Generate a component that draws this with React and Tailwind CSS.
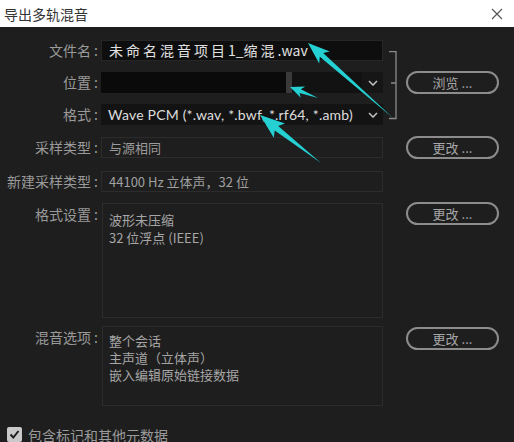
import React from 'react';

const cjk = { fontFamily: '"Noto Sans CJK SC", "Noto Sans", sans-serif' };

function Label({ children, className = '' }) {
    return (
        <div className={`w-[98px] shrink-0 text-right text-[14px] leading-[21px] text-[#9a9a9a] ${className}`}>
            {children}
            <span className="ml-[3px]">:</span>
        </div>
    );
}

function PillButton({ children, className = '' }) {
    return (
        <button className={`w-[93px] h-[23px] shrink-0 rounded-full border-2 border-[#8c8c8c] text-[13px] leading-none text-[#a6a6a6] flex items-center justify-center ${className}`}>
            {children}
        </button>
    );
}

function Chevron() {
    return (
        <svg width="10" height="6" viewBox="0 0 10 6" className="mx-auto">
            <path d="M1 1 L5 5 L9 1" fill="none" stroke="#bdbdbd" strokeWidth="1.6" />
        </svg>
    );
}

function Arrows() {
    return (
        <svg className="absolute inset-0 pointer-events-none" width="514" height="442" viewBox="0 0 514 442">
            <polygon fill="#24d0d2" points="308,43 329.8,51.6 323.2,53 393,118 319.8,56.8 319.2,63.6" />
            <polygon fill="#24d0d2" points="290,87 305.2,86.5 300.9,89.2 318,98 299.5,92.9 300.8,97.7" />
            <polygon fill="#24d0d2" points="260,115 285,123.5 278.2,126 321,163 274.7,130.5 273.8,137.8" />
        </svg>
    );
}

export default function App() {
    return (
        <div className="relative w-[514px] h-[442px] overflow-hidden bg-[#1e1e1e]" style={cjk}>
            <div className="h-[27px] bg-white flex items-center justify-between pl-[4px] pr-[11px]">
                <span className="text-[14px] text-[#333] leading-none">导出多轨混音</span>
                <svg width="12" height="12" viewBox="0 0 12 12">
                    <path d="M1 1 L11 11 M11 1 L1 11" stroke="#555" strokeWidth="1.2" />
                </svg>
            </div>

            <div className="pt-[13px]">
                <div className="flex">
                    <div className="flex flex-col gap-[11px] w-[383px]">
                        <div className="flex h-[21px]">
                            <Label>文件名</Label>
                            <div className="ml-[3px] flex-1 bg-[#0e0e0e] border border-[#262626] pl-[7px] text-[14px] leading-[19px] text-[#e2e2e2] whitespace-nowrap">
                                <span className="tracking-[3px]">未命名混音项目</span>1_<span className="tracking-[3px]">缩混</span>.wav
                            </div>
                        </div>
                        <div className="flex h-[21px]">
                            <Label>位置</Label>
                            <div className="ml-[3px] flex-1 flex">
                                <div className="w-[185px] bg-[#0a0a0a]"></div>
                                <div className="w-[6px] bg-[#3a3a3a]"></div>
                                <div className="w-[70px] bg-[#121212]"></div>
                                <div className="flex-1 bg-[#161616] flex items-center"><Chevron /></div>
                            </div>
                        </div>
                        <div className="flex h-[21px]">
                            <Label>格式</Label>
                            <div className="ml-[3px] flex-1 flex bg-[#131313]">
                                <div className="flex-1 pl-[7px] text-[14px] leading-[21px] tracking-[0.2px] text-[#dedede] whitespace-nowrap overflow-hidden" style={{ fontFamily: 'Lato, "Noto Sans CJK SC", sans-serif' }}>
                                    Wave PCM (*.wav, *.bwf, *.rf64, *.amb)
                                </div>
                                <div className="w-[21px] flex items-center"><Chevron /></div>
                            </div>
                        </div>
                    </div>
                    <svg width="14" height="69" viewBox="0 0 14 69" className="mt-[11px] ml-[3px] shrink-0">
                        <path d="M3 0.7 H10 V67.5 H3 M5 32 H10" fill="none" stroke="#8a8a8a" strokeWidth="1.3" />
                    </svg>
                    <PillButton className="mt-[31px] ml-[6px]">浏览 ...</PillButton>
                </div>

                <div className="flex items-center h-[21px] mt-[12px]">
                    <Label>采样类型</Label>
                    <div className="ml-[3px] w-[282px] h-[21px] border border-[#2c2c2c] pl-[7px] text-[13px] leading-[19px] text-[#9a9a9a]">与源相同</div>
                    <PillButton className="ml-[23px]">更改 ...</PillButton>
                </div>

                <div className="flex items-center h-[21px] mt-[13px]">
                    <Label>新建采样类型</Label>
                    <div className="ml-[3px] w-[282px] h-[21px] border border-[#2c2c2c] pl-[7px] text-[13px] leading-[19px] text-[#a0a0a0]">44100 Hz 立体声，32 位</div>
                </div>

                <div className="flex items-start mt-[11px]">
                    <Label className="pt-[1px]">格式设置</Label>
                    <div className="ml-[4px] w-[281px] h-[115px] border border-[#2c2c2c] pl-[6px] pt-[7px] text-[13px] leading-[18px] text-[#a6a6a6]">
                        <div>波形未压缩</div>
                        <div>32 位浮点 (IEEE)</div>
                    </div>
                    <PillButton className="ml-[23px] -mt-[1px]">更改 ...</PillButton>
                </div>

                <div className="flex items-start mt-[8px]">
                    <Label className="pt-[1px]">混音选项</Label>
                    <div className="ml-[4px] w-[281px] h-[80px] border border-[#2c2c2c] pl-[6px] pt-[5px] text-[13px] leading-[17px] text-[#a6a6a6]">
                        <div>整个会话</div>
                        <div>主声道（立体声）</div>
                        <div>嵌入编辑原始链接数据</div>
                    </div>
                    <PillButton className="ml-[23px] mt-[1px]">更改 ...</PillButton>
                </div>

                <div className="flex items-center mt-[21px] pl-[7px]">
                    <div className="w-[15px] h-[15px] rounded-[2px] bg-[#c9c9c9] flex items-center justify-center">
                        <svg width="11" height="11" viewBox="0 0 11 11">
                            <path d="M1.5 5.5 L4.3 8.5 L9.5 2" fill="none" stroke="#1e1e1e" strokeWidth="2" />
                        </svg>
                    </div>
                    <span className="ml-[6px] text-[14px] leading-none text-[#9a9a9a]">包含标记和其他元数据</span>
                </div>
            </div>

            <Arrows />
        </div>
    );
}
